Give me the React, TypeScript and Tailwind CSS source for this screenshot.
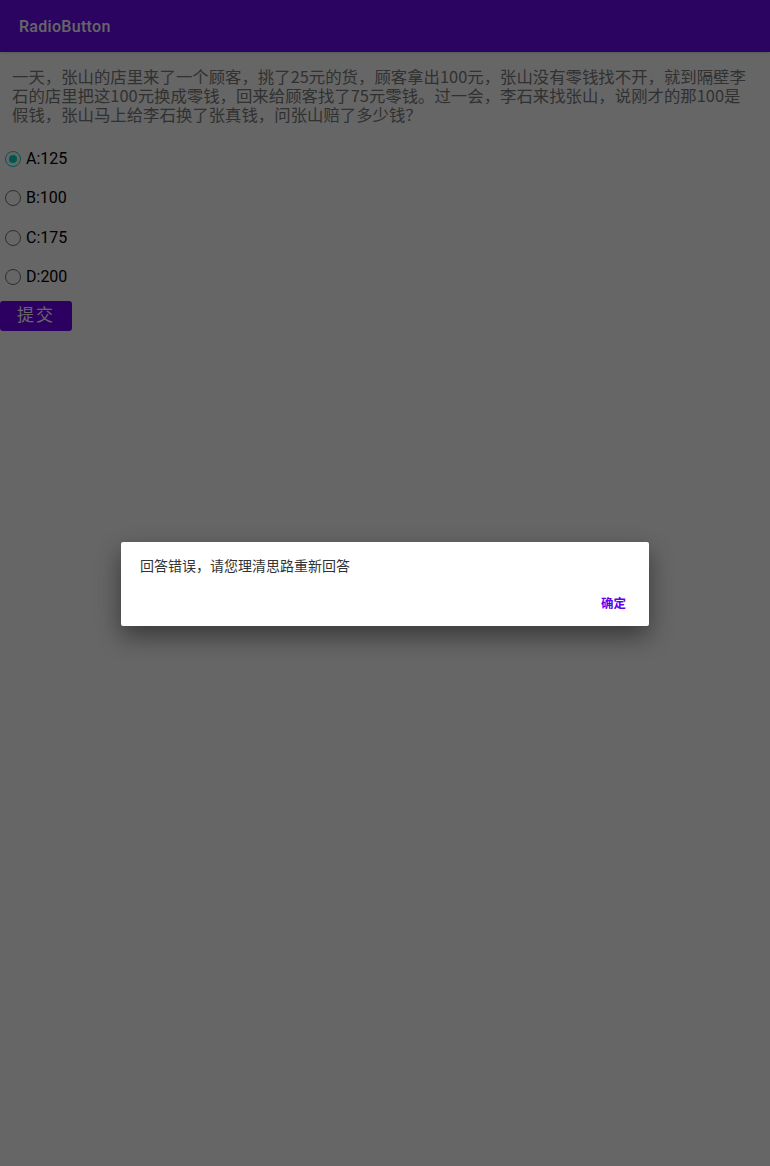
import { useState } from 'react'

const options = ['A:125', 'B:100', 'C:175', 'D:200']

const font = { fontFamily: 'Roboto, "Noto Sans CJK SC", sans-serif' }

function Radio({ checked }: { checked: boolean }) {
  return (
    <span
      className={`w-[16px] h-[16px] rounded-full border-[1.75px] flex items-center justify-center shrink-0 ${
        checked ? 'border-[#03dac5]' : 'border-[#757575]'
      }`}
    >
      {checked && <span className="w-[8px] h-[8px] rounded-full bg-[#03dac5]" />}
    </span>
  )
}

export default function App() {
  const [selected, setSelected] = useState(0)
  const [open, setOpen] = useState(true)

  return (
    <div className="relative w-[770px] h-[1166px] bg-white overflow-hidden" style={font}>
      {/* App bar */}
      <div className="h-[52px] bg-[#6a0cf0] flex items-center px-[19px] shadow">
        <span className="text-white text-[16px] font-medium tracking-[0.3px] pt-[2px]">RadioButton</span>
      </div>

      <div className="flex flex-col">
        <p className="pl-[12px] pr-[20px] pt-[15px] text-[16.4px] leading-[19px] text-[#7a7a7a] font-['Noto_Sans_CJK_SC',sans-serif]">
          一天，张山的店里来了一个顾客，挑了25元的货，顾客拿出100元，张山没有零钱找不开，就到隔壁李石的店里把这100元换成零钱，回来给顾客找了75元零钱。过一会，李石来找张山，说刚才的那100是假钱，张山马上给李石换了张真钱，问张山赔了多少钱？
        </p>

        <div className="flex flex-col mt-[15px]">
          {options.map((o, i) => (
            <button
              key={o}
              onClick={() => setSelected(i)}
              className="h-[39.5px] flex items-center gap-[5px] pl-[5px] text-left"
            >
              <Radio checked={selected === i} />
              <span className="text-[16px] text-black">{o}</span>
            </button>
          ))}
        </div>

        <button
          onClick={() => setOpen(true)}
          className="mt-[4px] w-[72px] h-[30px] rounded-[3px] bg-[#6d00ef] text-white text-[17px] tracking-[2px] flex items-center justify-center"
        >
          提交
        </button>
      </div>

      {/* Dim + dialog */}
      {open && (
        <div className="absolute inset-0 bg-black/60 flex flex-col items-center">
          <div className="mt-[542px] w-[528px] h-[84px] bg-white rounded-[2px] shadow-[0_10px_24px_rgba(0,0,0,0.45)] flex flex-col pl-[19px] pr-[23px]">
            <p className="pt-[14px] text-[14px] leading-[20px] text-[#333]">回答错误，请您理清思路重新回答</p>
            <div className="flex justify-end mt-[20px]">
              <button onClick={() => setOpen(false)} className="text-[12.5px] font-bold text-[#6200ee] leading-[16px]">
                确定
              </button>
            </div>
          </div>
        </div>
      )}
    </div>
  )
}
